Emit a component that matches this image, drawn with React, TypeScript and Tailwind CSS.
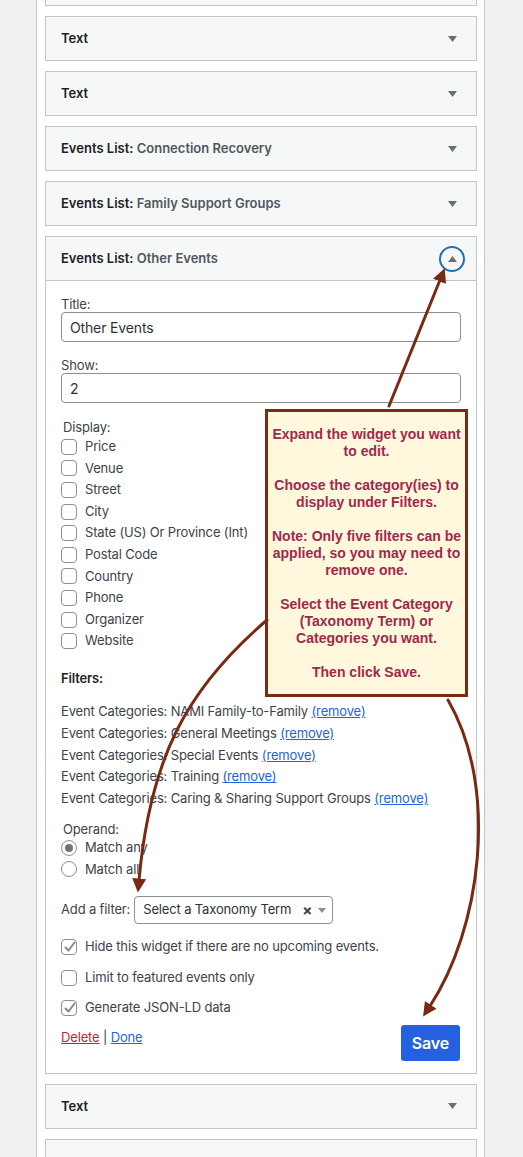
import React from "react";

const ui = { fontFamily: "Inter, 'Noto Sans', sans-serif" };

function Caret({ up = false }: { up?: boolean }) {
  return (
    <svg width="9" height="6" viewBox="0 0 9 6" className="block">
      {up ? <polygon points="0,6 9,6 4.5,0" fill="#6b6f74" /> : <polygon points="0,0 9,0 4.5,6" fill="#6b6f74" />}
    </svg>
  );
}

function WidgetHeader({ title, sub, open = false }: { title: string; sub?: string; open?: boolean }) {
  return (
    <div className="h-[43px] bg-[#f6f7f7] flex items-center justify-between pl-[15px] pr-[8px]">
      <div className="text-[13px] font-semibold text-[#1d2327]">
        {title}
        {sub && <span className="text-[#50575e]"> {sub}</span>}
      </div>
      <div className="w-[26px] h-[26px] flex items-center justify-center mr-[3px]">
        {open ? (
          <div className="w-[26px] h-[26px] rounded-full border-2 border-[#2271b1] flex items-center justify-center">
            <Caret up />
          </div>
        ) : (
          <Caret />
        )}
      </div>
    </div>
  );
}

function Widget({ title, sub, className = "" }: { title: string; sub?: string; className?: string }) {
  return (
    <div className={"border border-[#c3c4c7] " + className}>
      <WidgetHeader title={title} sub={sub} />
    </div>
  );
}

function Checkbox({ checked = false }: { checked?: boolean }) {
  return (
    <span className="relative w-4 h-4 shrink-0 rounded-[4px] border border-[#8c8f94] bg-white">
      {checked && (
        <svg viewBox="0 0 16 16" className="absolute left-0 top-[-1px] w-4 h-4">
          <path d="M3.5 8.5 L6.5 11.5 L12.5 3.5" fill="none" stroke="#7e8993" strokeWidth="2" strokeLinecap="round" strokeLinejoin="round" />
        </svg>
      )}
    </span>
  );
}

function CheckRow({ label, checked = false }: { label: string; checked?: boolean }) {
  return (
    <div className="h-[21.6px] flex items-center gap-2">
      <Checkbox checked={checked} />
      <span>{label}</span>
    </div>
  );
}

function Radio({ label, checked = false }: { label: string; checked?: boolean }) {
  return (
    <div className="h-[21.6px] flex items-center gap-2">
      <span className="w-4 h-4 rounded-full border border-[#8c8f94] bg-white flex items-center justify-center">
        {checked && <span className="w-2 h-2 rounded-full bg-[#6c7781]" />}
      </span>
      <span>{label}</span>
    </div>
  );
}

const displayFields = ["Price", "Venue", "Street", "City", "State (US) Or Province (Int)", "Postal Code", "Country", "Phone", "Organizer", "Website"];
const filters = ["NAMI Family-to-Family", "General Meetings", "Special Events", "Training", "Caring & Sharing Support Groups"];

export default function App() {
  return (
    <div className="relative h-[1157px] overflow-hidden bg-[#f0f0f1]" style={ui}>
      <div className="ml-[36px] w-[449px] h-full bg-white border-x border-[#c3c4c7] pl-2 pr-[7px]">
        <div className="flex flex-col gap-[10px]">
          <Widget title="" className="mt-[-39px]" />
          <Widget title="Text" />
          <Widget title="Text" />
          <Widget title="Events List:" sub="Connection Recovery" />
          <Widget title="Events List:" sub="Family Support Groups" />

          {/* expanded widget */}
          <div className="border border-[#c3c4c7]">
            <div className="border-b border-[#c3c4c7]">
              <WidgetHeader title="Events List:" sub="Other Events" open />
            </div>
            <div className="px-[15px] pt-[15px] pb-[12px] text-[13px] text-[#3c434a] tracking-[-0.15px]">
              <div className="leading-[16px]">Title:</div>
              <div className="h-[30px] border border-[#8c8f94] rounded-[4px] flex items-center px-2 text-[14px] text-[#2c3338]">Other Events</div>
              <div className="leading-[16px] mt-[15px]">Show:</div>
              <div className="h-[30px] border border-[#8c8f94] rounded-[4px] flex items-center px-2 text-[14px] text-[#2c3338]">2</div>

              <div className="leading-[16px] mt-[16px] pl-[2px]">Display:</div>
              <div className="mt-[1px]">
                {displayFields.map((f) => (
                  <CheckRow key={f} label={f} />
                ))}
              </div>

              <div className="leading-[16px] mt-[18px] font-semibold text-[#1d2327]">Filters:</div>
              <div className="mt-[15px]">
                {filters.map((f) => (
                  <div key={f} className="h-[21.8px] flex items-center whitespace-nowrap">
                    Event Categories: {f}&nbsp;
                    <a href="#" className="text-[#2563d8] underline">(remove)</a>
                  </div>
                ))}
              </div>

              <div className="leading-[16px] mt-[11px] pl-[2px]">Operand:</div>
              <Radio label="Match any" checked />
              <Radio label="Match all" />

              <div className="mt-[16px] flex items-center gap-[4px]">
                <span>Add a filter:</span>
                <div className="w-[199px] h-[28px] border border-[#8c8f94] rounded-[4px] flex items-center pl-2 pr-[6px] text-[13px] text-[#2c3338] whitespace-nowrap">
                  <span className="flex-1">Select a Taxonomy Term</span>
                  <span className="text-[15px] font-bold text-[#3c434a] mr-[6px] leading-none">×</span>
                  <svg width="8" height="5" viewBox="0 0 8 5">
                    <polygon points="0,0 8,0 4,5" fill="#8c8f94" />
                  </svg>
                </div>
              </div>

              <div className="mt-[12px] flex flex-col gap-[9px]">
                <CheckRow label="Hide this widget if there are no upcoming events." checked />
                <CheckRow label="Limit to featured events only" />
                <CheckRow label="Generate JSON-LD data" checked />
              </div>

              <div className="mt-[6px] flex items-start justify-between">
                <div className="mt-[3px] leading-[18px]">
                  <a href="#" className="text-[#b32d2e] underline">Delete</a> | <a href="#" className="text-[#2563d8] underline">Done</a>
                </div>
                <button className="w-[59px] h-[36px] rounded-[3px] bg-[#2560e0] text-white text-[16px] font-semibold mr-[1px]">Save</button>
              </div>
            </div>
          </div>

          <Widget title="Text" />
          <Widget title="" />
        </div>
      </div>

      {/* callout note */}
      <div
        className="absolute left-[265px] top-[409px] w-[203px] h-[288px] border-[3px] border-[#7a2c12] bg-[#fff8dc] pt-[14px] text-center text-[14px] font-bold leading-[17px] text-[#a0284e] whitespace-nowrap"
        style={{ fontFamily: "'Liberation Sans', Arial, sans-serif" }}
      >
        <p>Expand the widget you want<br />to edit.</p>
        <p className="mt-[17px]">Choose the category(ies) to<br />display under Filters.</p>
        <p className="mt-[17px]">Note: Only five filters can be<br />applied, so you may need to<br />remove one.</p>
        <p className="mt-[17px]">Select the Event Category<br />(Taxonomy Term) or<br />Categories you want.</p>
        <p className="mt-[17px]">Then click Save.</p>
      </div>

      {/* arrows */}
      <svg className="absolute left-0 top-0 pointer-events-none" width="523" height="1157">
        <defs>
          <marker id="ah" viewBox="0 0 10 10" refX="1" refY="5" markerUnits="userSpaceOnUse" markerWidth="14" markerHeight="14" orient="auto">
            <path d="M0 0 L10 5 L0 10 z" fill="#7a2a12" />
          </marker>
        </defs>
        <g fill="none" stroke="#7a2a12" strokeWidth="3" strokeLinecap="round">
          <path d="M389 406 L440 280" markerEnd="url(#ah)" />
          <path d="M267 620 C 185 690, 150 760, 139 880" markerEnd="url(#ah)" />
          <path d="M448 700 C 500 790, 480 930, 430 1006" markerEnd="url(#ah)" />
        </g>
      </svg>
    </div>
  );
}
